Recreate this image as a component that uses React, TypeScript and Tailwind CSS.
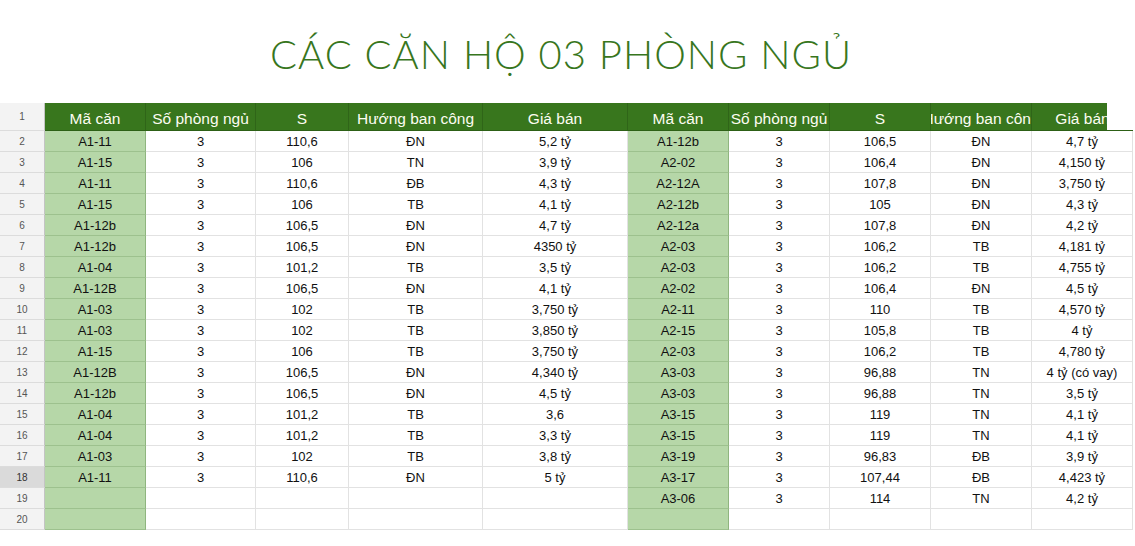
const HEAD = ["Mã căn", "Số phòng ngủ", "S", "Hướng ban công", "Giá bán"];

const LEFT: string[][] = [
  ["A1-11", "3", "110,6", "ĐN", "5,2 tỷ"],
  ["A1-15", "3", "106", "TN", "3,9 tỷ"],
  ["A1-11", "3", "110,6", "ĐB", "4,3 tỷ"],
  ["A1-15", "3", "106", "TB", "4,1 tỷ"],
  ["A1-12b", "3", "106,5", "ĐN", "4,7 tỷ"],
  ["A1-12b", "3", "106,5", "ĐN", "4350 tỷ"],
  ["A1-04", "3", "101,2", "TB", "3,5 tỷ"],
  ["A1-12B", "3", "106,5", "ĐN", "4,1 tỷ"],
  ["A1-03", "3", "102", "TB", "3,750 tỷ"],
  ["A1-03", "3", "102", "TB", "3,850 tỷ"],
  ["A1-15", "3", "106", "TB", "3,750 tỷ"],
  ["A1-12B", "3", "106,5", "ĐN", "4,340 tỷ"],
  ["A1-12b", "3", "106,5", "ĐN", "4,5 tỷ"],
  ["A1-04", "3", "101,2", "TB", "3,6"],
  ["A1-04", "3", "101,2", "TB", "3,3 tỷ"],
  ["A1-03", "3", "102", "TB", "3,8 tỷ"],
  ["A1-11", "3", "110,6", "ĐN", "5 tỷ"],
];

const RIGHT: string[][] = [
  ["A1-12b", "3", "106,5", "ĐN", "4,7 tỷ"],
  ["A2-02", "3", "106,4", "ĐN", "4,150 tỷ"],
  ["A2-12A", "3", "107,8", "ĐN", "3,750 tỷ"],
  ["A2-12b", "3", "105", "ĐN", "4,3 tỷ"],
  ["A2-12a", "3", "107,8", "ĐN", "4,2 tỷ"],
  ["A2-03", "3", "106,2", "TB", "4,181 tỷ"],
  ["A2-03", "3", "106,2", "TB", "4,755 tỷ"],
  ["A2-02", "3", "106,4", "ĐN", "4,5 tỷ"],
  ["A2-11", "3", "110", "TB", "4,570 tỷ"],
  ["A2-15", "3", "105,8", "TB", "4 tỷ"],
  ["A2-03", "3", "106,2", "TB", "4,780 tỷ"],
  ["A3-03", "3", "96,88", "TN", "4 tỷ (có vay)"],
  ["A3-03", "3", "96,88", "TN", "3,5 tỷ"],
  ["A3-15", "3", "119", "TN", "4,1 tỷ"],
  ["A3-15", "3", "119", "TN", "4,1 tỷ"],
  ["A3-19", "3", "96,83", "ĐB", "3,9 tỷ"],
  ["A3-17", "3", "107,44", "ĐB", "4,423 tỷ"],
  ["A3-06", "3", "114", "TN", "4,2 tỷ"],
];

// spreadsheet column widths (incl. 1px right gridline)
const COLS = "grid grid-cols-[45px_101px_110px_93px_134px_145px_101px_101px_101px_101px_101px]";

function HeadCell({ text, last }: { text: string; last?: boolean }) {
  return (
    <div
      className={`relative h-[28px] bg-[#38761d] border-b border-b-[#2d6016] flex items-end justify-center pb-[2px] ${
        last ? "" : "border-r border-r-[#2f6518] overflow-hidden"
      }`}
    >
      <div className="w-full overflow-hidden flex justify-center">
        <span className="whitespace-nowrap text-[15.5px] leading-[18px] text-[#fdfdf2]">{text}</span>
      </div>
      {last && <div className="absolute right-0 top-0 h-[27px] w-[26px] bg-white" />}
    </div>
  );
}

function Cell({ text, green }: { text?: string; green?: boolean }) {
  return (
    <div
      className={`h-[21px] border-r border-b overflow-hidden flex justify-center pt-[1px] text-[13px] leading-[19px] text-[#111] whitespace-nowrap ${
        green ? "bg-[#b6d7a8] border-r-[#8fb57f] border-b-[#9dc18e]" : "bg-white border-[#e2e2e2]"
      }`}
    >
      {text}
    </div>
  );
}

export default function App() {
  const rows = Array.from({ length: 19 }, (_, i) => i);
  return (
    <div className="w-[1135px] h-[546px] bg-white overflow-hidden font-['Liberation_Sans',Arial,sans-serif]">
      <div className="h-[103px] flex justify-center pt-[34px] pr-[13px]">
        <h1 className="font-['Lato','Open_Sans',sans-serif] font-light text-[40px] leading-[40px] text-[#38761d] tracking-[1px]">
          CÁC CĂN HỘ 03 PHÒNG NGỦ
        </h1>
      </div>

      <div className={COLS}>
        <div className="h-[28px] bg-[#f3f3f3] border-r border-b border-r-[#c4c4c4] border-b-[#dcdcdc] flex items-center justify-center text-[10px] text-[#555]">
          1
        </div>
        {HEAD.map((h) => (
          <HeadCell key={"l" + h} text={h} />
        ))}
        {HEAD.map((h, i) => (
          <HeadCell key={"r" + h} text={h} last={i === 4} />
        ))}

        {rows.map((i) => {
          const l = LEFT[i];
          const r = RIGHT[i];
          return (
            <div key={i} className="contents">
              <div
                className={`h-[21px] border-r border-b border-r-[#c4c4c4] border-b-[#dcdcdc] flex items-center justify-center text-[10px] ${
                  i === 16 ? "bg-[#dadada] text-[#333]" : "bg-[#f3f3f3] text-[#555]"
                }`}
              >
                {i + 2}
              </div>
              <Cell text={l?.[0]} green />
              {[1, 2, 3, 4].map((c) => (
                <Cell key={"l" + c} text={l?.[c]} />
              ))}
              <Cell text={r?.[0]} green />
              {[1, 2, 3, 4].map((c) => (
                <Cell key={"r" + c} text={r?.[c]} />
              ))}
            </div>
          );
        })}
      </div>
    </div>
  );
}
